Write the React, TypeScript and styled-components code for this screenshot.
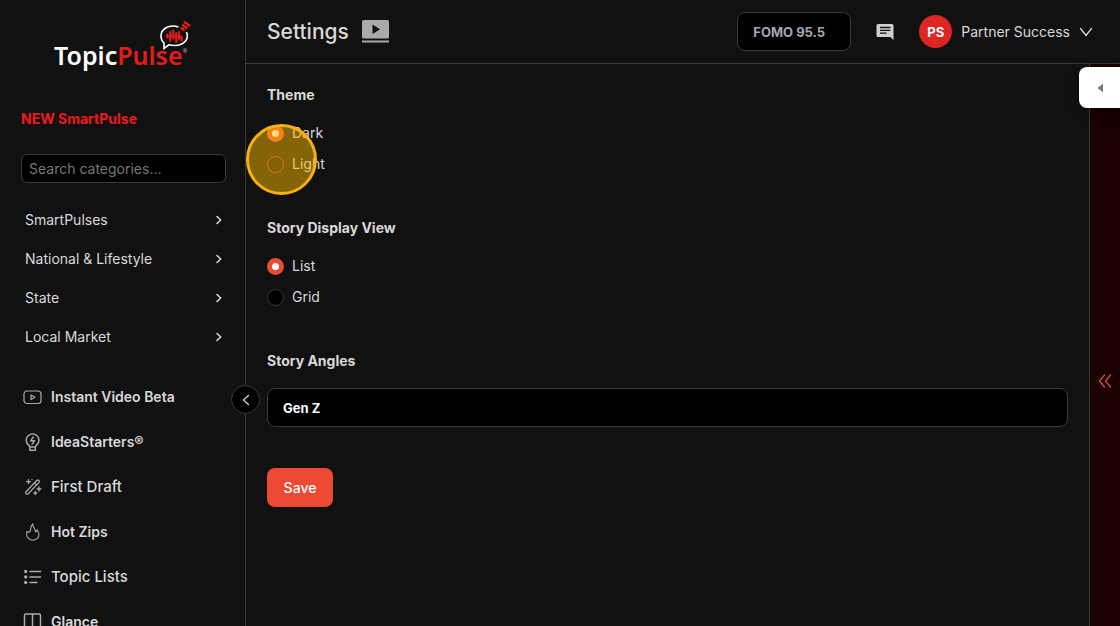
import React from "react";
import styled, { createGlobalStyle } from "styled-components";

const Global = createGlobalStyle`
  * { box-sizing: border-box; }
  body {
    margin: 0;
    background: #111;
    color: #d9d9d9;
    font-family: Inter, "Liberation Sans", sans-serif;
    font-size: 14px;
    line-height: 20px;
    overflow: hidden;
  }
  button, input, select { font: inherit; color: inherit; margin: 0; }
  button { cursor: pointer; border: 0; background: none; padding: 0; }
  a { color: inherit; text-decoration: none; }
  svg { display: block; flex: none; }
`;

const Shell = styled.div`
  display: flex;
  height: 100vh;
  overflow: hidden;
`;

const Sidebar = styled.aside`
  position: relative;
  flex: none;
  width: 246px;
  border-right: 1px solid #3a3a3a;
  padding: 20px 19px 0 21px;
`;

const LogoLink = styled.a`
  display: block;
  margin: 0 0 38px 32px;
`;

const SmartLink = styled.a`
  display: block;
  color: #f01a1a;
  font-weight: 700;
  margin-bottom: 25px;
`;

const Search = styled.input`
  display: block;
  width: 100%;
  height: 29px;
  border: 1px solid #3a3a3a;
  border-radius: 6px;
  background: #000;
  padding: 0 7px;
  &::placeholder { color: #777; opacity: 1; }
`;

const Categories = styled.nav`
  display: flex;
  flex-direction: column;
  padding: 17px 0 18px;
`;

const Category = styled.button`
  display: flex;
  align-items: center;
  justify-content: space-between;
  height: 39px;
  padding: 0 3px 0 4px;
`;

const Tools = styled.nav`
  display: flex;
  flex-direction: column;
`;

const Tool = styled.a<{ $large?: boolean }>`
  display: flex;
  align-items: center;
  gap: 9px;
  height: 45px;
  padding-left: 2px;
  font-size: ${(p) => (p.$large ? 15 : 14)}px;
  font-weight: ${(p) => (p.$large ? 500 : 600)};
  svg { color: #aaa; }
`;

const Collapse = styled.button`
  position: absolute;
  right: -15px;
  top: 385px;
  width: 29px;
  height: 29px;
  display: grid;
  place-items: center;
  border: 1px solid #3a3a3a;
  border-radius: 50%;
  background: #000;
  z-index: 2;
`;

const Page = styled.div`
  flex: 1;
  min-width: 0;
  display: flex;
  flex-direction: column;
`;

const Header = styled.header`
  display: flex;
  align-items: center;
  height: 64px;
  flex: none;
  padding: 0 27px 0 21px;
  border-bottom: 1px solid #3a3a3a;
`;

const Title = styled.h1`
  margin: 0 12px 0 0;
  font-size: 21px;
  line-height: 28px;
  font-weight: 500;
`;

const Station = styled.button`
  width: 114px;
  height: 39px;
  margin: 0 25px 0 auto;
  padding-left: 15px;
  text-align: left;
  border: 1px solid #3a3a3a;
  border-radius: 8px;
  background: #000;
  color: #a3a7b3;
  font-size: 13px;
  font-weight: 700;
`;

const Account = styled.button`
  display: flex;
  align-items: center;
  gap: 9px;
  margin-left: 25px;
`;

const Avatar = styled.span`
  display: grid;
  place-items: center;
  width: 33px;
  height: 33px;
  border-radius: 50%;
  background: #dc2626;
  color: #fff;
  font-size: 13px;
  font-weight: 700;
`;

const Body = styled.div`
  flex: 1;
  min-height: 0;
  display: flex;
`;

const Form = styled.form`
  flex: 1;
  min-width: 0;
  padding: 21px 21px 0;
`;

const Group = styled.fieldset`
  position: relative;
  border: 0;
  margin: 0 0 44px;
  padding: 0;
`;

const Heading = styled.legend`
  padding: 0;
  margin-bottom: 18px;
  font-weight: 700;
`;

const Options = styled.div`
  display: flex;
  flex-direction: column;
  align-items: flex-start;
  gap: 11px;
`;

const Option = styled.label`
  display: flex;
  align-items: center;
  gap: 8px;
`;

const Radio = styled.input<{ $accent?: boolean }>`
  appearance: none;
  width: 17px;
  height: 17px;
  border: 1px solid ${(p) => (p.$accent ? "#c8401f" : "#3a3a3a")};
  border-radius: 50%;
  background: ${(p) => (p.$accent ? "#0a0a0a" : "#000")};
  &:checked {
    border: 5px solid #ee4a33;
    background: #fff;
  }
`;

const Highlight = styled.span`
  position: absolute;
  left: -21px;
  top: 1px;
  width: 71px;
  height: 71px;
  border-radius: 50%;
  border: 3px solid #f5b014;
  background: rgba(255, 185, 0, 0.49);
  pointer-events: none;
`;

const AngleLabel = styled.label`
  display: block;
  font-weight: 700;
  margin-bottom: 17px;
`;

const AngleSelect = styled.select`
  appearance: none;
  display: block;
  width: 100%;
  height: 39px;
  margin-bottom: 41px;
  padding: 0 15px;
  border: 1px solid #3a3a3a;
  border-radius: 8px;
  background: #000;
  color: #fff;
  font-size: 13px;
  font-weight: 700;
`;

const Save = styled.button`
  width: 66px;
  height: 39px;
  border-radius: 8px;
  background: #ee4a33;
  color: #fff;
  font-weight: 500;
`;

const Rail = styled.aside`
  position: relative;
  flex: none;
  width: 31px;
  display: flex;
  align-items: center;
  justify-content: center;
  border-left: 1px solid #3a3a3a;
  background: #1a0000;
  color: #d94a4a;
  padding-top: 72px;
`;

const RailTab = styled.button`
  position: absolute;
  right: 0;
  top: 3px;
  width: 41px;
  height: 41px;
  display: grid;
  place-items: center;
  border-radius: 8px 0 0 8px;
  background: #fff;
  box-shadow: 0 4px 14px rgba(0, 0, 0, 0.3);
`;

const Logo = () => (
  <svg width="139" height="51" viewBox="53 20 139 51" role="img" aria-label="TopicPulse">
    <text x="54" y="65" fontFamily="'Noto Sans', sans-serif" fontSize="25" fontWeight="600" fill="#fff">Topic<tspan fill="#e31b1b">Pulse</tspan></text>
    <path d="M178.500 27C168.500 24 161 29 161 36c0 3.500 1.200 5.500 3 7L164 48.500l5-3.700c9.500 2.500 18.300-1.800 18.300-9 0-1.500-.3-2.600-.9-3.800" fill="#111" stroke="#fff" strokeWidth="1.600" />
    <path d="M167.300 34.500v3M170.300 32v9M173.200 30.500v8M176.200 33v9M179 32v7M181.500 36.500v4" stroke="#e31b1b" strokeWidth="2.200" strokeLinecap="round" />
    <path d="M167.300 36.500h14" stroke="#e31b1b" strokeWidth="1.800" />
    <path d="M184 21.800l6.200 4.400M182.300 24.800l5.200 3.700M181 27.800l3.700 2.600" stroke="#e31b1b" strokeWidth="2.500" />
    <text x="182.500" y="53" fontFamily="'Noto Sans', sans-serif" fontSize="6" fill="#aaa">®</text>
  </svg>
);

const line = { fill: "none", stroke: "currentColor", strokeLinecap: "round", strokeLinejoin: "round" } as const;

const tools = [
  { name: "Instant Video Beta", icon: (
    <svg width="19" height="20" viewBox="0 0 19 20" {...line} strokeWidth="1.200">
      <rect x="1" y="4" width="17" height="12.500" rx="3" /><path d="M8 8v4.600l4-2.300z" />
    </svg>) },
  { name: "IdeaStarters®", icon: (
    <svg width="19" height="20" viewBox="0 0 19 20" {...line} strokeWidth="1.400">
      <path d="M6.500 15v-1.200C4.400 12.500 3.300 10.500 3.300 8.200a6.300 6.300 0 0 1 12.600 0c0 2.300-1.100 4.300-3.200 5.600V15zM6.800 15v3.300h5.600V15" />
      <path d="M10.200 5L7.600 8.800h4L9 12.300" />
    </svg>) },
  { name: "First Draft", large: true, icon: (
    <svg width="19" height="20" viewBox="0 0 19 20" {...line} strokeWidth="1.300">
      <path d="M3 14.700L13.700 3.500a1.500 1.500 0 0 1 2.200 2.100L5.200 16.800A1.500 1.500 0 0 1 3 14.700zM11.500 5.900l2.100 2" />
      <path d="M5.500 2.700v4M3.500 4.700h4M16 10v4M14 12h4M12.300 14.500v3M10.800 16h3M9 2.500h.01" />
    </svg>) },
  { name: "Hot Zips", icon: (
    <svg width="19" height="20" viewBox="0 0 19 20" {...line} strokeWidth="1.100">
      <path d="M9.800 1.800C7 4.500 8.200 7 7 9.500c-1 1-2.600.8-3.200-.2C2.600 14 5.500 18.200 9.800 18.200c4 0 6.200-2.800 6.200-5.700 0-2-1-3.300-2-4.600-.2 1-.8 1.700-1.600 2.100C12.800 6.500 9.300 5 9.800 1.800z" />
    </svg>) },
  { name: "Topic Lists", large: true, icon: (
    <svg width="19" height="20" viewBox="0 0 19 20" {...line} strokeWidth="1.600">
      <path d="M7 4.500h10.500M7 10h10.500M7 15.500h7" />
      <path d="M2.700 4.500h.01M2.700 10h.01M2.700 15.500h.01" strokeWidth="3.400" />
    </svg>) },
  { name: "Glance", icon: (
    <svg width="19" height="20" viewBox="0 0 19 20" {...line} strokeWidth="1.500">
      <rect x="1.500" y="2" width="16" height="16" rx="1.500" /><path d="M9.500 2v16" />
    </svg>) },
];

const categories = ["SmartPulses", "National & Lifestyle", "State", "Local Market"];

export default function App() {
  return (
    <>
      <Global />
      <Shell>
        <Sidebar>
          <LogoLink href="#"><Logo /></LogoLink>
          <SmartLink href="#">NEW SmartPulse</SmartLink>
          <Search type="search" placeholder="Search categories..." aria-label="Search categories" />
          <Categories>
            {categories.map((name) => (
              <Category key={name} type="button">
                {name}
                <svg width="8" height="12" viewBox="0 0 8 12" {...line} strokeWidth="1.600"><path d="M2 2.500L5.700 6 2 9.500" /></svg>
              </Category>
            ))}
          </Categories>
          <Tools>
            {tools.map(({ name, icon, large }) => <Tool key={name} href="#" $large={large}>{icon}{name}</Tool>)}
          </Tools>
          <Collapse type="button" aria-label="Collapse sidebar">
            <svg width="10" height="12" viewBox="0 0 10 12" {...line} strokeWidth="1.300"><path d="M7.500 1.500L2.500 6l5 4.500" /></svg>
          </Collapse>
        </Sidebar>
        <Page>
          <Header>
            <Title>Settings</Title>
            <svg width="28" height="24" viewBox="0 0 28 24">
              <rect x="1" y="0" width="27" height="18.500" rx="1.500" fill="#aaa" />
              <path d="M11.500 4.500v9.500l7.500-4.800z" fill="#111" />
              <rect x="1" y="20.500" width="27" height="2" fill="#aaa" />
            </svg>
            <Station type="button">FOMO 95.5</Station>
            <button type="button" aria-label="Messages">
              <svg width="18" height="18" viewBox="0 0 18 18">
                <path d="M2 1h14a1.500 1.500 0 0 1 1.500 1.500V17l-3.200-3H2a1.500 1.500 0 0 1-1.500-1.500v-10A1.500 1.500 0 0 1 2 1z" fill="#d0d0d0" />
                <path d="M4 4.500h10.500M4 7.300h10.500M4 10.200h6.500" stroke="#111" strokeWidth="1.300" />
              </svg>
            </button>
            <Account type="button">
              <Avatar>PS</Avatar>
              Partner Success
              <svg width="14" height="10" viewBox="0 0 14 10" {...line} strokeWidth="1.300"><path d="M1.500 1.500L7 8.500l5.500-7" /></svg>
            </Account>
          </Header>
          <Body>
            <Form onSubmit={(e) => e.preventDefault()}>
              <Group>
                <Heading>Theme</Heading>
                <Options>
                  <Option><Radio type="radio" name="theme" defaultChecked />Dark</Option>
                  <Option><Radio type="radio" name="theme" $accent />Light</Option>
                </Options>
                <Highlight />
              </Group>
              <Group>
                <Heading>Story Display View</Heading>
                <Options>
                  <Option><Radio type="radio" name="view" defaultChecked />List</Option>
                  <Option><Radio type="radio" name="view" />Grid</Option>
                </Options>
              </Group>
              <AngleLabel htmlFor="angle">Story Angles</AngleLabel>
              <AngleSelect id="angle"><option>Gen Z</option></AngleSelect>
              <Save type="submit">Save</Save>
            </Form>
            <Rail>
              <RailTab type="button" aria-label="Open panel">
                <svg width="8" height="10" viewBox="0 0 8 10"><path d="M7 0.500v9L1.500 5z" fill="#7b7f8a" /></svg>
              </RailTab>
              <button type="button" aria-label="Expand panel">
                <svg width="14" height="16" viewBox="0 0 14 16" {...line} strokeWidth="1.300"><path d="M6.500 2L1.500 8l5 6M12.500 2l-5 6 5 6" /></svg>
              </button>
            </Rail>
          </Body>
        </Page>
      </Shell>
    </>
  );
}
